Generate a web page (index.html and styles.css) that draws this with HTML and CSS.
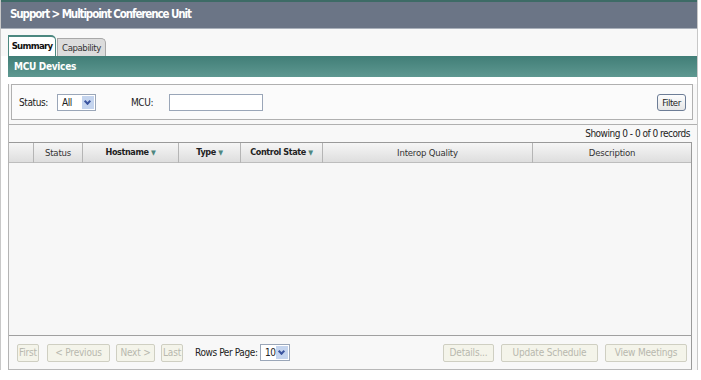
FILE: index.html
```html
<!DOCTYPE html>
<html lang="en">
<head>
    <meta charset="UTF-8">
    <title>Multipoint Conference Unit</title>
    <link rel="stylesheet" href="styles.css">
</head>
<body>
    <div class="frame">
        <div class="topline"></div>
        <div class="header">Support &gt; Multipoint Conference Unit</div>

        <div class="tabs">
            <div class="tab active">Summary</div>
            <div class="tab">Capability</div>
        </div>

        <div class="section">MCU Devices</div>

        <div class="panel">
            <div class="filter">
                <label class="lbl">Status:</label>
                <div class="select status-select"><span>All</span><span class="arrow"></span></div>
                <label class="lbl mcu">MCU:</label>
                <div class="textbox"></div>
                <button class="filter-btn">Filter</button>
            </div>

            <div class="records">Showing 0 - 0 of 0 records</div>

            <div class="thead">
                <div class="th"></div>
                <div class="th">Status</div>
                <div class="th bold">Hostname <span class="sort">&#9660;</span></div>
                <div class="th bold">Type <span class="sort">&#9660;</span></div>
                <div class="th bold">Control State <span class="sort">&#9660;</span></div>
                <div class="th">Interop Quality</div>
                <div class="th last">Description</div>
            </div>
            <div class="tbody"></div>

            <div class="footer">
                <button class="btn first" disabled>First</button>
                <button class="btn prev" disabled>&lt; Previous</button>
                <button class="btn next" disabled>Next &gt;</button>
                <button class="btn last" disabled>Last</button>
                <span class="rows">Rows Per Page:</span>
                <div class="select rows-select"><span>10</span><span class="arrow"></span></div>
                <div class="spacer"></div>
                <button class="btn details" disabled>Details...</button>
                <button class="btn wide" disabled>Update Schedule</button>
                <button class="btn meet" disabled>View Meetings</button>
            </div>
        </div>
    </div>
</body>
</html>
```

FILE: styles.css
```css
body {
    margin: 0;
    background-color: #fff;
    font-family: "DejaVu Sans Condensed", "DejaVu Sans", sans-serif;
    font-size: 9.5px;
    letter-spacing: -0.4px;
    color: #222;
}
.frame {
    width: 696px;
    border-left: 1px solid #c8c8c8;
    border-right: 1px solid #c8c8c8;
}
.topline {
    height: 2px;
    background-color: #3d6b66;
}
.header {
    height: 26px;
    line-height: 25px;
    padding-left: 9px;
    background-color: #6b7586;
    color: #fff;
    font-size: 11.5px;
    letter-spacing: -1.1px;
    font-weight: bold;
    border-bottom: 1px solid #a9b0ba;
}
.tabs {
    display: flex;
    align-items: flex-end;
    height: 27px;
    padding-left: 7px;
    background-color: #f8f8f8;
}
.tab {
    width: 47px;
    height: 17px;
    line-height: 18px;
    margin-right: 1px;
    text-align: center;
    background-color: #dcdcdc;
    border: 1px solid #a8a8a8;
    border-bottom: none;
    border-top-right-radius: 5px;
    color: #333;
}
.tab.active {
    width: 46px;
    height: 19px;
    background-color: #fff;
    border: 1px solid #4c8880;
    border-top-width: 2px;
    border-bottom: none;
    font-weight: bold;
    letter-spacing: -0.7px;
    color: #111;
}
.section {
    height: 21px;
    line-height: 21px;
    margin-left: 7px;
    padding-left: 6px;
    background: linear-gradient(to bottom, #417e77, #5e9891);
    color: #fff;
    font-weight: bold;
    font-size: 10px;
    letter-spacing: -0.3px;
}
.panel {
    margin-left: 7px;
    border-left: 1px solid #b4b4b4;
    background-color: #f8f8f8;
}
.filter {
    display: flex;
    align-items: center;
    height: 34px;
    margin: 7px 4px 0 2px;
    padding: 0 6px 0 7px;
    border: 1px solid #b0b0b0;
    background-color: #fbfbfb;
}
.lbl {
    font-size: 10px;
    width: 38px;
}
.lbl.mcu {
    margin-left: 35px;
}
.select {
    display: flex;
    align-items: center;
    justify-content: space-between;
    height: 15px;
    padding-left: 4px;
    border: 1px solid #9aa6b8;
    background-color: #fff;
    font-size: 10px;
}
.status-select {
    width: 33px;
}
.arrow {
    width: 12px;
    height: 13px;
    margin-right: 1px;
    background-color: #c4d4ee;
    position: relative;
}
.arrow::after {
    content: "";
    position: absolute;
    left: 3px;
    top: 3px;
    width: 3px;
    height: 3px;
    border-right: 2px solid #3b55a0;
    border-bottom: 2px solid #3b55a0;
    transform: rotate(45deg);
}
.textbox {
    width: 92px;
    height: 15px;
    border: 1px solid #9aa6b8;
    background-color: #fff;
}
.filter-btn {
    margin-left: auto;
    width: 29px;
    height: 17px;
    padding: 0;
    font-family: inherit;
    font-size: 9.5px;
    letter-spacing: -0.4px;
    color: #222;
    background: linear-gradient(to bottom, #fdfdfd, #e6e6e6);
    border: 1px solid #6d7d96;
    border-radius: 3px;
}
.records {
    height: 17px;
    line-height: 17px;
    margin-top: 4px;
    padding-right: 7px;
    border-top: 1px solid #b0b0b0;
    text-align: right;
    font-size: 10px;
    letter-spacing: -0.5px;
}
.thead {
    display: grid;
    grid-template-columns: 25px 49px 96px 62px 82px 210px 159px;
    height: 19px;
    margin-right: 5px;
    background: linear-gradient(to bottom, #f6f6f6, #dedede);
    border-top: 1px solid #9a9a9a;
    border-bottom: 1px solid #bdbdbd;
}
.th {
    line-height: 19px;
    text-align: center;
    font-size: 9.5px;
    letter-spacing: -0.2px;
    border-right: 1px solid #b5b5b5;
    color: #333;
    white-space: nowrap;
}
.th.bold {
    font-size: 9px;
    letter-spacing: -0.4px;
    font-weight: bold;
    color: #222;
}
.th.last {
    border-right: 1px solid #9a9a9a;
}
.sort {
    font-size: 7px;
    color: #4e8780;
}
.tbody {
    height: 172px;
    margin-right: 5px;
    border-right: 1px solid #9a9a9a;
    background-color: #f7f7f7;
}
.footer {
    display: flex;
    align-items: center;
    height: 33px;
    padding: 0 4px 0 8px;
    border-top: 1px solid #a0a0a0;
    border-bottom: 1px solid #b8b8b8;
    margin-right: 5px;
    border-right: 1px solid #9a9a9a;
    background-color: #f8f8f8;
}
.btn {
    height: 18px;
    padding: 0;
    font-family: inherit;
    font-size: 10px;
    letter-spacing: -0.2px;
    color: #b8b8ae;
    background-color: #f4f4ea;
    border: 1px solid #cfcfc2;
    border-radius: 2px;
}
.btn.first {
    width: 22px;
}
.btn.prev {
    width: 63px;
    margin-left: 8px;
}
.btn.next {
    width: 39px;
    margin-left: 6px;
}
.btn.last {
    width: 22px;
    margin-left: 6px;
}
.rows {
    width: 65px;
    margin-left: 12px;
    font-size: 10px;
    white-space: nowrap;
    color: #222;
}
.rows-select {
    width: 24px;
}
.spacer {
    flex: 1;
}
.btn.details {
    width: 51px;
}
.btn.wide {
    width: 97px;
    margin-left: 7px;
}
.btn.meet {
    width: 82px;
    margin-left: 7px;
}
```
